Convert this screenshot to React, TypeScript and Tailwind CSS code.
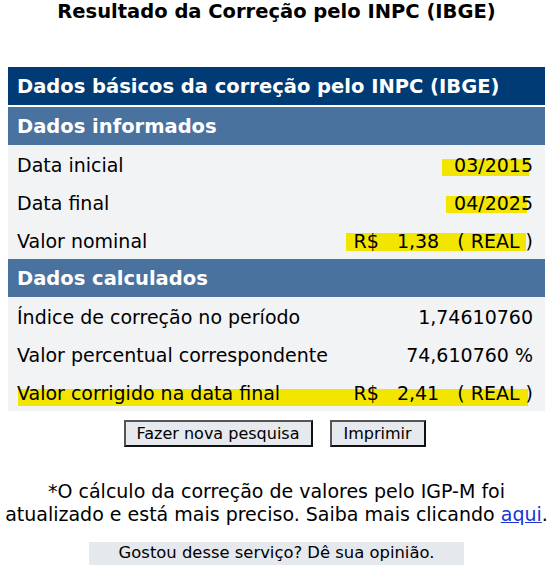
import React from 'react';

type Row = {
  label: string;
  value: React.ReactNode;
  mark?: string; // highlight box classes
};

const informados: Row[] = [
  { label: 'Data inicial', value: '03/2015', mark: 'left-[434px] right-[16px] top-[14px] h-[17px]' },
  { label: 'Data final', value: '04/2025', mark: 'left-[438px] right-[18px] top-[13px] h-[17px]' },
  {
    label: 'Valor nominal',
    value: <span className="whitespace-pre">{'R$   1,38   ( REAL )'}</span>,
    mark: 'left-[338px] right-[19px] top-[12px] h-[18px]',
  },
];

const calculados: Row[] = [
  { label: 'Índice de correção no período', value: '1,74610760' },
  { label: 'Valor percentual correspondente', value: '74,610760 %' },
  {
    label: 'Valor corrigido na data final',
    value: <span className="whitespace-pre">{'R$   2,41   ( REAL )'}</span>,
    mark: 'left-[10px] right-[17px] top-[16px] h-[17px]',
  },
];

const SectionHeader: React.FC<{ title: string }> = ({ title }) => (
  <div className="h-[38px] bg-[#4a729f] text-white font-bold text-[19.5px] flex items-center px-[9px] pt-[1px]">
    {title}
  </div>
);

const DataRow: React.FC<{ row: Row }> = ({ row }) => (
  <div className="relative h-[38px] flex items-center justify-between pl-[9px] pr-[12px] pt-[3px] text-[19px] text-black">
    {row.mark && <span className={`absolute bg-[#f2e600] ${row.mark}`} />}
    <span className="relative">{row.label}</span>
    <span className="relative">{row.value}</span>
  </div>
);

export default function App() {
  return (
    <div className="w-[553px] min-h-[571px] bg-white font-['DejaVu_Sans',sans-serif] text-black">
      <h1 className="text-center font-bold text-[19.5px] leading-[24px]">Resultado da Correção pelo INPC (IBGE)</h1>

      <div className="mx-2 mt-[43px]">
        <div className="h-[38px] bg-[#003b76] text-white font-bold text-[19.5px] flex items-center px-[9px] pt-[1px]">
          Dados básicos da correção pelo INPC (IBGE)
        </div>
        <div className="mt-[2px]">
          <SectionHeader title="Dados informados" />
          <div className="bg-[#f2f3f5]">
            {informados.map((r) => (
              <DataRow key={r.label} row={r} />
            ))}
          </div>
          <SectionHeader title="Dados calculados" />
          <div className="bg-[#f2f3f5]">
            {calculados.map((r) => (
              <DataRow key={r.label} row={r} />
            ))}
          </div>
        </div>
      </div>

      {/* Botoes */}
      <div className="flex justify-center gap-[17px] mt-[9px] pr-[4px]">
        <button className="h-[27px] w-[189px] bg-[#e6e9ee] border-2 border-t-[#555] border-l-[#555] border-b-[#111] border-r-[#111] text-[16px] leading-none">
          Fazer nova pesquisa
        </button>
        <button className="h-[27px] w-[96px] bg-[#e6e9ee] border-2 border-t-[#555] border-l-[#555] border-b-[#111] border-r-[#111] text-[16px] leading-none">
          Imprimir
        </button>
      </div>

      <p className="text-center text-[19px] leading-[23px] mt-[33px] whitespace-nowrap">
        *O cálculo da correção de valores pelo IGP-M foi
        <br />
        atualizado e está mais preciso. Saiba mais clicando{' '}
        <a href="#" className="text-[#1a33d6] underline">
          aqui
        </a>
        .
      </p>

      <div className="flex justify-center mt-[16px]">
        <div className="w-[375px] h-[23px] bg-[#e5e8ec] text-[16.4px] flex items-center justify-center">
          Gostou desse serviço? Dê sua opinião.
        </div>
      </div>
    </div>
  );
}
